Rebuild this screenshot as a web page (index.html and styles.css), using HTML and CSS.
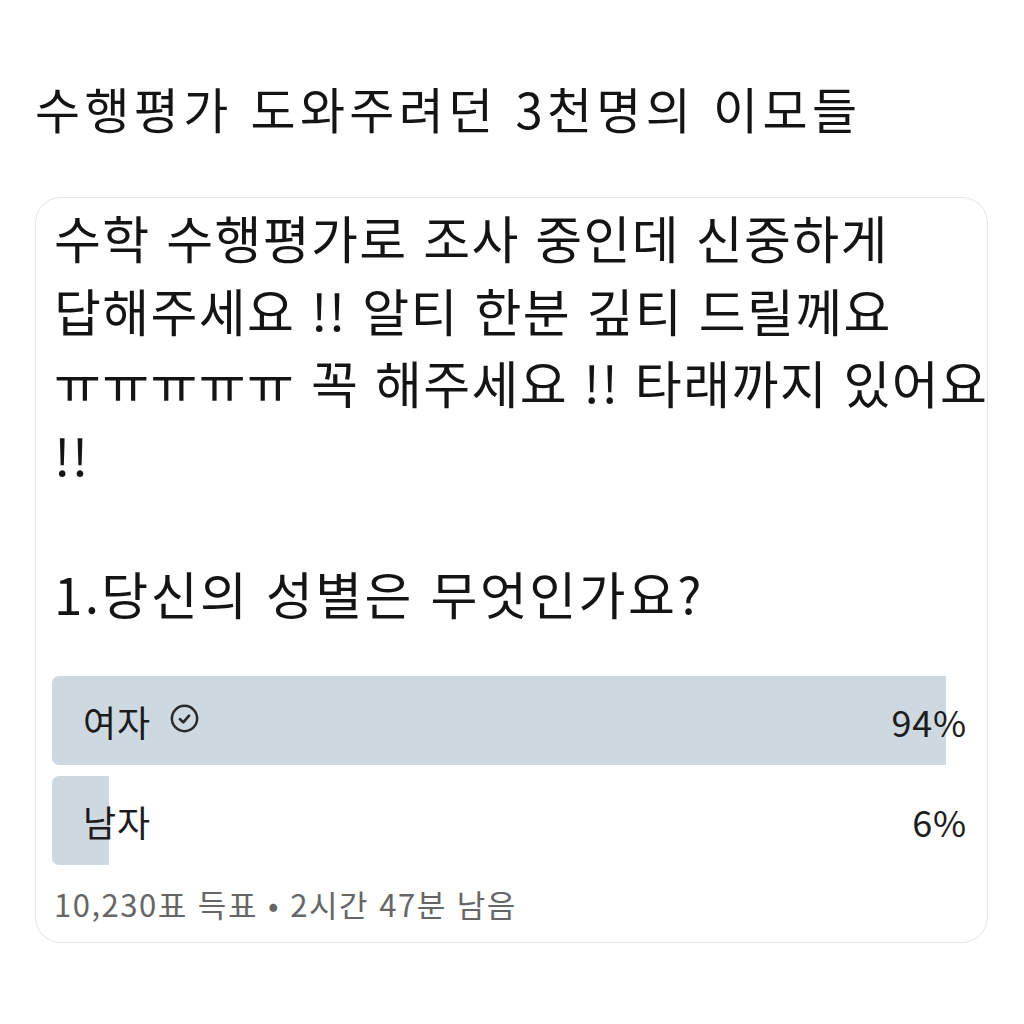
FILE: index.html
```html
<!DOCTYPE html>
<html lang="ko">
<head>
<meta charset="utf-8">
<link rel="stylesheet" href="styles.css">
</head>
<body>
<div class="page">
  <h1 class="title">수행평가 도와주려던 3천명의 이모들</h1>
  <div class="card">
    <p class="body-text">수학 수행평가로 조사 중인데 신중하게<br>답해주세요 !! 알티 한분 깊티 드릴께요<br>ㅠㅠㅠㅠㅠ 꼭 해주세요 !! 타래까지 있어요<br>!!</p>
    <p class="question">1.당신의 성별은 무엇인가요?</p>
    <div class="options">
      <div class="option">
        <div class="fill" style="width:94%"></div>
        <span class="label">여자 <svg class="check" viewBox="0 0 28 28" width="29" height="29"><circle cx="14" cy="14" r="12.2" fill="none" stroke="#2a2a2a" stroke-width="2.4"/><path d="M9.6 14.6l3.2 3.1 5.6-6.4" fill="none" stroke="#2a2a2a" stroke-width="2.6" stroke-linecap="round" stroke-linejoin="round"/></svg></span>
        <span class="pct">94%</span>
      </div>
      <div class="option">
        <div class="fill" style="width:6%"></div>
        <span class="label">남자</span>
        <span class="pct">6%</span>
      </div>
    </div>
    <p class="meta">10,230표 득표 • 2시간 47분 남음</p>
  </div>
</div>
</body>
</html>
```

FILE: styles.css
```css
html, body {
  margin: 0;
  padding: 0;
  background: #ffffff;
}
body {
  font-family: "Noto Sans CJK KR", "Noto Sans", sans-serif;
  color: #141414;
}
.page {
  padding: 70px 36px 0 35px;
}
.title {
  margin: 0;
  font-size: 49px;
  font-weight: 400;
  line-height: 76px;
  letter-spacing: 4.3px;
  white-space: nowrap;
}
.card {
  margin-top: 51px;
  border: 1.5px solid #e4e4e4;
  border-radius: 26px;
  height: 746px;
  box-sizing: border-box;
  padding: 3px 0 0 18px;
}
.body-text {
  margin: 0;
  font-size: 51px;
  line-height: 72.5px;
  white-space: nowrap;
  letter-spacing: 1.35px;
}
.question {
  margin: 66px 0 0 0;
  font-size: 51px;
  line-height: 72px;
  letter-spacing: 2.4px;
  white-space: nowrap;
}
.options {
  margin-top: 47px;
  display: flex;
  flex-direction: column;
  gap: 11px;
  width: 951px;
  margin-left: -2px;
}
.option {
  position: relative;
  height: 89px;
  display: flex;
  align-items: center;
  justify-content: space-between;
  font-size: 36px;
  letter-spacing: 0.8px;
  color: #1c1c1c;
}
.fill {
  position: absolute;
  left: 0;
  top: 0;
  bottom: 0;
  background: #cdd8e1;
  border-radius: 7px 0 0 7px;
}
.label {
  position: relative;
  padding-left: 31px;
  display: flex;
  align-items: center;
  gap: 19px;
}
.check {
  display: block;
  margin-bottom: 4px;
}
.pct {
  position: relative;
  padding-right: 36px;
}
.meta {
  margin: 19px 0 0 0;
  font-size: 31px;
  letter-spacing: 1.5px;
  color: #666666;
  line-height: 40px;
  white-space: nowrap;
}
```
